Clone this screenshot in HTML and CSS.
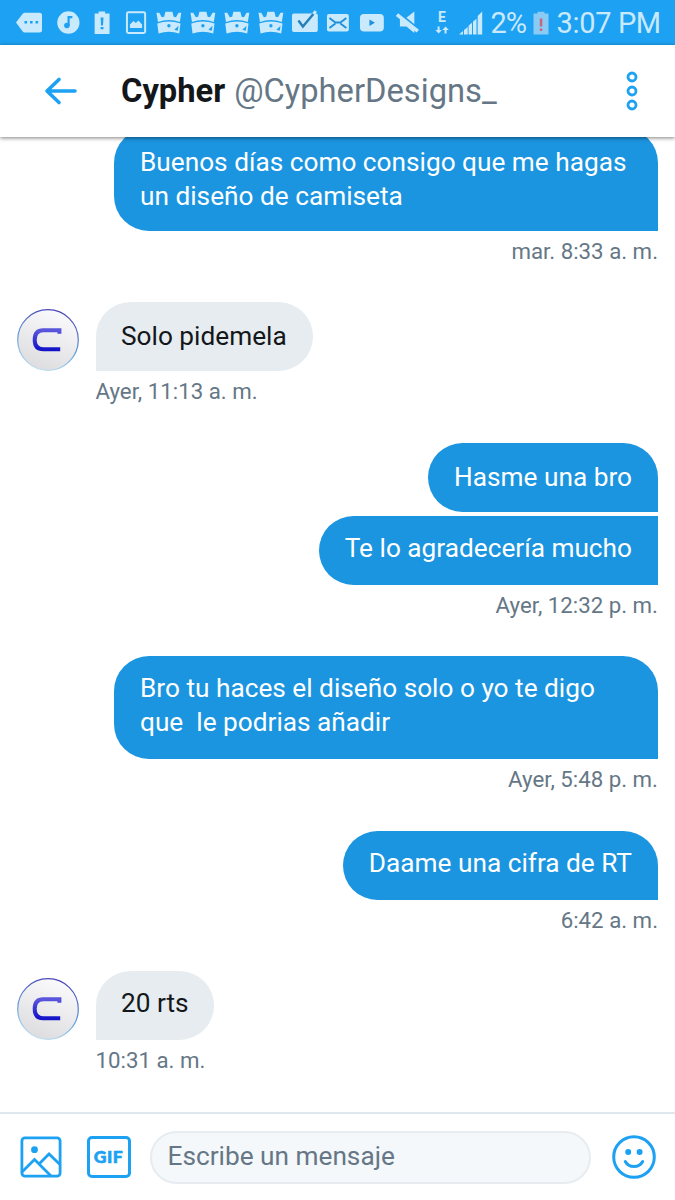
FILE: index.html
```html
<!DOCTYPE html>
<html lang="es">
<head>
<meta charset="utf-8">
<title>Cypher</title>
<link rel="stylesheet" href="styles.css">
</head>
<body>
<svg class="defs" width="0" height="0">
  <defs>
    <linearGradient id="disc" x1="0.7" y1="0" x2="0.3" y2="1"><stop offset="0" stop-color="#fbfafc"/><stop offset="1" stop-color="#dcdbdd"/></linearGradient>
    <linearGradient id="rim" x1="0.6" y1="0" x2="0.3" y2="1"><stop offset="0" stop-color="#4a45b8"/><stop offset="0.55" stop-color="#5d9bd8"/><stop offset="1" stop-color="#c5e4f2"/></linearGradient>
    <linearGradient id="letter" x1="0" y1="0" x2="0" y2="1"><stop offset="0" stop-color="#5a56dc"/><stop offset="1" stop-color="#1414c8"/></linearGradient>
    <symbol id="crown" viewBox="0 0 34 46">
      <path fill="currentColor" d="M4.500 12.800h2.800l2.600 4.500 2.300-.5 1.300-5h7l1.300 5 2.300.5 2.600-4.500h2.800l-1.500 9.200q-11-3.800-22 0z"/>
      <path fill="currentColor" d="M5.300 23.500q11.700-4 23.400 0L27.400 33.600q-10.400-3.600-20.800 0z"/>
      <circle cx="17" cy="25.800" r="1.700" fill="#1da1f2"/><path d="M22.500 29.700l4.200-4-.8 5z" fill="#1da1f2"/>
    </symbol>
    <symbol id="avatar" viewBox="0 0 62 62">
      <circle cx="31" cy="31" r="30.300" fill="url(#disc)" stroke="url(#rim)" stroke-width="1.200"/>
      <path d="M43.200 24.500v-3.500H27q-8.500 0-8.500 9.500t8.500 9.500h17" transform="translate(-.8 .3)" fill="none" stroke="url(#letter)" stroke-width="4"/>
    </symbol>
  </defs>
</svg>
<div class="screen">
  <div class="status">
    <svg class="tag" viewBox="0 0 39 46"><path fill="currentColor" d="M4 22.500L10.500 14q1-1.200 2.500-1.200h14.500q2.500 0 2.500 2.500V30q0 2.500-2.500 2.500H13q-1.500 0-2.500-1.200z"/><path d="M12.500 21h2.600v2.600h-2.600zM18 21h2.600v2.600H18zM23.500 21h2.600v2.600h-2.600z" fill="#1da1f2"/></svg>
    <svg viewBox="0 0 34 46"><circle cx="17.500" cy="22.500" r="11.200" fill="currentColor"/><circle cx="16" cy="25.500" r="2.800" fill="#1da1f2"/><path d="M17.700 25.500v-8.500H21.500" fill="none" stroke="#1da1f2" stroke-width="2.200"/></svg>
    <svg viewBox="0 0 34 46"><path fill="currentColor" d="M9.700 13.500h4v-2h6.500v2h4.500V34h-15z"/><path d="M15.700 17.500h2.900l-.5 8h-1.900zM15.700 27h2.900v2.400h-2.900z" fill="#1da1f2"/></svg>
    <svg viewBox="0 0 34 46"><rect x="8" y="12.300" width="18.300" height="20.700" rx="1.500" fill="none" stroke="currentColor" stroke-width="2"/><path fill="currentColor" d="M11 28v-3.500l3.500-3.500 2.500 2 2.500-2.500 3.700 4V28z"/></svg>
    <svg><use href="#crown"/></svg><svg><use href="#crown"/></svg><svg><use href="#crown"/></svg><svg><use href="#crown"/></svg>
    <svg viewBox="0 0 34 46"><rect x="4" y="13.500" width="26" height="18.500" rx="2" fill="currentColor"/><path d="M24 16l4-5" stroke="currentColor" stroke-width="3"/><path d="M10.500 20.500l4.500 6L25.500 14" fill="none" stroke="#2580b8" stroke-width="2.500"/></svg>
    <svg viewBox="0 0 34 46"><rect x="6" y="14" width="22" height="17.500" rx="2" fill="currentColor"/><path d="M8.500 18l6 4.500h5l6-4.500M8.500 28l6-4.500M25.500 28l-6-4.500" fill="none" stroke="#1d8fdc" stroke-width="1.900"/></svg>
    <svg viewBox="0 0 34 46"><rect x="5" y="14" width="24" height="17.500" rx="4" fill="currentColor"/><path d="M14.500 19.500l5.500 3.200-5.500 3.200z" fill="#1d8fdc"/></svg>
    <svg viewBox="0 0 34 46"><path fill="currentColor" d="M11 18.500h5.500L25.500 11.500v21.500l-8-6.500H11z"/><path d="M8 11.500l22 18" stroke="#1da1f2" stroke-width="2.600"/><path d="M8 14.500l21 16.700" stroke="currentColor" stroke-width="3.600"/></svg>
    <svg viewBox="0 0 34 46"><text x="19" y="21.700" text-anchor="middle" class="net">E</text><path fill="currentColor" d="M14.700 26.500h2V30H19l-3.300 3.500-3.300-3.500h2.300zM21.700 33.500h2V30H26l-3.300-3.500-3.300 3.500h2.300z"/></svg>
    <svg class="signal" viewBox="0 0 24 24"><path fill="currentColor" d="M0 23.500l4-3.500v3.500zM5 19l3.700-3v7.500H5zM9.600 14.500l3.400-2.700v11.700H9.600zM14 10.500l3.500-2.800v15.800H14zM18.700 5l4.500-4.500v23h-4.500z"/></svg>
    <span class="percent">2%</span>
    <svg class="battery" viewBox="0 0 16 24"><path fill="#8acbf5" d="M.5 2.500h4V.7h7v1.800h4v21H.5z"/><path d="M6.800 7.500h2.500v8H6.800zM6.800 17.500h2.500V20H6.800z" fill="#c8677a"/></svg>
    <span class="clock">3:07 PM</span>
  </div>
  <header class="header">
    <svg class="back" viewBox="0 0 34 30"><path d="M31 15H3M15 3.500L3 15l12 11.500" fill="none" stroke="currentColor" stroke-width="3.600" stroke-linecap="round" stroke-linejoin="round"/></svg>
    <h1 class="name">Cypher</h1><span class="handle">@CypherDesigns_</span>
    <svg class="more" viewBox="0 0 12 40"><g fill="none" stroke="currentColor" stroke-width="2.800"><circle cx="6" cy="6" r="4"/><circle cx="6" cy="20" r="4"/><circle cx="6" cy="34" r="4"/></g></svg>
  </header>
  <main class="chat">
    <section class="group sent"><p class="bubble wide">Buenos días como consigo que me hagas<br>un diseño de camiseta</p><time>mar. 8:33 a. m.</time></section>
    <section class="group received"><svg class="avatar"><use href="#avatar"/></svg><div class="stack"><p class="bubble">Solo pidemela</p><time>Ayer, 11:13 a. m.</time></div></section>
    <section class="group sent"><p class="bubble">Hasme una bro</p><p class="bubble raised">Te lo agradecería mucho</p><time>Ayer, 12:32 p. m.</time></section>
    <section class="group sent"><p class="bubble wide raised">Bro tu haces el diseño solo o yo te digo<br>que&nbsp; le podrias añadir</p><time>Ayer, 5:48 p. m.</time></section>
    <section class="group sent"><p class="bubble raised">Daame una cifra de RT</p><time>6:42 a. m.</time></section>
    <section class="group received"><svg class="avatar"><use href="#avatar"/></svg><div class="stack"><p class="bubble raised short">20 rts</p><time>10:31 a. m.</time></div></section>
  </main>
  <footer class="composer">
    <svg class="photo" viewBox="0 0 42 42"><g fill="none" stroke="currentColor" stroke-width="2.800"><rect x="1.900" y="1.900" width="38.200" height="38.200" rx="3"/><path d="M2 36l12.500-12.500L31 40M19.500 27.500L29 18l11 10.500"/></g><circle cx="14.500" cy="13.700" r="3.400" fill="currentColor"/></svg>
    <div class="gif">GIF</div>
    <div class="field">Escribe un mensaje</div>
    <svg class="smile" viewBox="0 0 44 44"><g fill="none" stroke="currentColor" stroke-width="3"><circle cx="22" cy="22" r="20.300"/><path d="M13.300 26.500Q16 31.500 22 31.500t8.700-5" stroke-linecap="round"/></g><circle cx="16.200" cy="17" r="3" fill="currentColor"/><circle cx="27.600" cy="17" r="3" fill="currentColor"/></svg>
  </footer>
</div>
</body>
</html>
```
FILE: styles.css
```css
* { box-sizing: border-box; }
body { margin: 0; font-family: Roboto, sans-serif; background: #fff; }
svg { flex: none; display: block; }
.defs { position: absolute; }
.screen { width: 675px; height: 1200px; overflow: hidden; display: flex; flex-direction: column; color: #14171a; }
.status { flex: none; height: 45px; background: #1da1f2; color: #c9e9fc; display: flex; align-items: center; padding-left: 12px; }
.status svg { width: 33.800px; height: 46px; }
.status .tag { width: 39px; }
.net { font-size: 14px; font-weight: 700; fill: currentColor; }
.status .signal { width: 24px; height: 24px; margin-left: 2px; }
.status .battery { width: 16px; height: 24px; margin-left: 5px; }
.percent, .clock { font-size: 29px; line-height: 45px; white-space: nowrap; padding-top: 1px; }
.percent { width: 37px; margin-left: 8px; letter-spacing: -1px; }
.clock { margin-left: 8px; letter-spacing: -.35px; }
.header { flex: none; height: 92px; display: flex; align-items: center; background: #fff; padding: 0 37px 0 44px; box-shadow: 0 1px 4px rgba(0,0,0,.5); z-index: 1; }
.back { width: 34px; height: 30px; color: #1da1f2; }
.name { margin: 0 9px 0 43px; font-size: 32.700px; font-weight: 700; line-height: 40px; }
.handle { font-size: 32.700px; line-height: 40px; color: #657786; }
.more { width: 12px; height: 40px; margin-left: auto; color: #1da1f2; }
.chat { flex: 1; min-height: 0; margin-top: -9px; padding: 0 17px; display: flex; flex-direction: column; gap: 30px; }
.group { display: flex; flex: none; }
.sent { flex-direction: column; align-items: flex-end; }
.bubble { margin: 0; padding: 17px 26px 18px; font-size: 26.220px; line-height: 34px; white-space: nowrap; }
.bubble.raised { padding-top: 15px; padding-bottom: 20px; }
.sent .bubble { background: #1b95e0; color: #fff; border-radius: 35px 35px 0 35px; }
.sent .bubble + .bubble { margin-top: 4px; border-top-right-radius: 0; }
.wide { width: 544px; }
.received .bubble { background: #e6ecf0; border-radius: 35px 35px 35px 0; padding-left: 25.500px; }
.received .short { padding-right: 25px; }
.stack { display: flex; flex-direction: column; align-items: flex-start; }
.avatar { width: 62px; height: 62px; margin: 7px 16.500px 0 0; }
time { font-size: 22.250px; line-height: 41.450px; color: #657786; white-space: nowrap; }
.composer { flex: none; height: 88px; border-top: 2px solid #e1e8ed; background: #fff; display: flex; align-items: center; padding: 0 19px 0 20px; }
.photo { width: 42px; height: 42px; color: #1da1f2; }
.gif { width: 44px; height: 42px; margin-left: 24.500px; border: 3px solid #1da1f2; border-radius: 5px; color: #1da1f2; font: 900 17.500px/36px Lato, sans-serif; letter-spacing: .6px; text-align: center; -webkit-text-stroke: .6px #1da1f2; }
.field { width: 441px; height: 53px; margin-left: 19px; border: 2px solid #e6ecf0; border-radius: 27px; background: #f5f8fa; color: #657786; font-size: 26.220px; line-height: 46px; padding-left: 16px; }
.smile { width: 44px; height: 44px; margin-left: auto; color: #1da1f2; }
```
